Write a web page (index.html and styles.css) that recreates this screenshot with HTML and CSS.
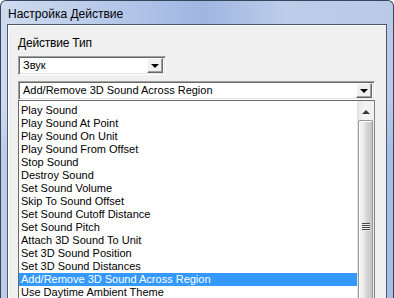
FILE: index.html
```html
<!DOCTYPE html>
<html lang="ru">
  <head>
    <meta charset="utf-8">
    <title>Настройка Действие</title>
    <link rel="stylesheet" href="styles.css">
  </head>
  <body>
    <div class="ventana">
      <div class="titulo">Настройка Действие</div>
      <div class="marco">
        <div class="cliente">
          <div class="etiqueta">Действие Тип</div>
          <div class="combo combo_corto">
            <span class="combo_texto">Звук</span>
            <span class="combo_boton"><span class="flecha_abajo"></span></span>
          </div>
          <div class="combo combo_largo">
            <span class="combo_texto">Add/Remove 3D Sound Across Region</span>
            <span class="combo_boton"><span class="flecha_abajo"></span></span>
          </div>
          <div class="lista">
            <ul class="items">
              <li>Play Sound</li>
              <li>Play Sound At Point</li>
              <li>Play Sound On Unit</li>
              <li>Play Sound From Offset</li>
              <li>Stop Sound</li>
              <li>Destroy Sound</li>
              <li>Set Sound Volume</li>
              <li>Skip To Sound Offset</li>
              <li>Set Sound Cutoff Distance</li>
              <li>Set Sound Pitch</li>
              <li>Attach 3D Sound To Unit</li>
              <li>Set 3D Sound Position</li>
              <li>Set 3D Sound Distances</li>
              <li class="activo">Add/Remove 3D Sound Across Region</li>
              <li>Use Daytime Ambient Theme</li>
            </ul>
            <div class="scroll">
              <div class="scroll_boton"><span class="flecha_arriba"></span></div>
              <div class="scroll_pulgar">
                <div class="agarre"><i></i><i></i><i></i><i></i></div>
              </div>
            </div>
          </div>
        </div>
      </div>
    </div>
  </body>
</html>
```

FILE: styles.css
```css
* {
  margin: 0;
  padding: 0;
  box-sizing: border-box;
}
html, body {height: 100%; overflow: hidden;}
body {background-color: #fff; font-family: "Liberation Sans", Arial, sans-serif; color: #000;}

.ventana {width: 394px; height: 340px; display: flex; flex-direction: column; border: 1px solid #38465c; border-bottom: none; border-radius: 6px 6px 0 0; background: linear-gradient(90deg, #cfdcef 0%, #b4c7e9 30%, #9fb6e1 52%, #bccdea 72%, #b8cae8 100%); overflow: hidden;}
.titulo {height: 25px; padding: 6px 0 0 7px; font-size: 12px; line-height: 15px;}
.marco {flex: 1; display: flex; padding: 0 6px 0 6px; background: linear-gradient(180deg, rgba(255,255,255,0) 0%, rgba(255,255,255,0) 25%, rgba(60,100,190,0.12) 40%, rgba(60,100,190,0.12) 100%);}
.cliente {flex: 1; background-color: #f0f0f0; border: 1px solid #4a5870; border-bottom: none; box-shadow: inset 1px 1px 0 #fff; padding: 11px 0 0 10px;}

.etiqueta {font-size: 12px; line-height: 15px; height: 15px; margin-bottom: 5px; letter-spacing: -0.2px;}

.combo {display: flex; align-items: center; height: 19px; background-color: #fff; border-top: 1px solid #a0a0a0; border-left: 1px solid #a0a0a0; border-right: 1px solid #fff; border-bottom: 1px solid #fff; box-shadow: inset 1px 1px 0 #696969, inset -1px -1px 0 #e3e3e3; padding: 0 2px 0 4px;}
.combo_corto {width: 148px; margin-bottom: 6px;}
.combo_largo {width: 357px;}
.combo_texto {flex: 1; font-size: 11px; line-height: 13px; white-space: nowrap; overflow: hidden;}
.combo_boton {width: 16px; height: 15px; display: flex; align-items: center; justify-content: center; background-color: #f0f0f0; border-top: 1px solid #fff; border-left: 1px solid #fff; border-right: 1px solid #696969; border-bottom: 1px solid #696969; box-shadow: inset -1px -1px 0 #a0a0a0;}
.flecha_abajo {width: 0; height: 0; border-left: 4px solid transparent; border-right: 4px solid transparent; border-top: 4px solid #000;}

.lista {display: flex; width: 357px; height: 240px; background-color: #fff; border: 1px solid #828282; border-top-color: #696969; border-left-color: #696969; border-bottom: none;}
.items {flex: 1; list-style: none; padding-top: 3px; overflow: hidden;}
.items li {height: 13px; font-size: 11px; line-height: 13px; padding-left: 2px; white-space: nowrap;}
.items li.activo {background-color: #3399ff; color: #fff;}

.scroll {width: 17px; display: flex; flex-direction: column; padding-top: 2px; background: linear-gradient(90deg, #e3e3e3, #f4f4f4 40%, #f0f0f0);}
.scroll_boton {height: 17px; display: flex; align-items: center; justify-content: center;}
.flecha_arriba {width: 0; height: 0; border-left: 4px solid transparent; border-right: 4px solid transparent; border-bottom: 4px solid #3a3a3a;}
.scroll_pulgar {height: 212px; margin: 0 1px; border: 1px solid #979797; border-bottom: none; border-radius: 2px 2px 0 0; background: linear-gradient(90deg, #f6f6f6 0%, #e8e8e8 40%, #d4d4d4 60%, #c6c6c6 100%); box-shadow: inset 1px 1px 0 #fff; display: flex; justify-content: center; padding-top: 102px;}
.agarre {width: 8px; height: 9px; display: flex; flex-direction: column; gap: 1px;}
.agarre i {display: block; height: 1px; background-color: #4a4a4a; box-shadow: 0 1px 0 #e8e8e8;}
```
